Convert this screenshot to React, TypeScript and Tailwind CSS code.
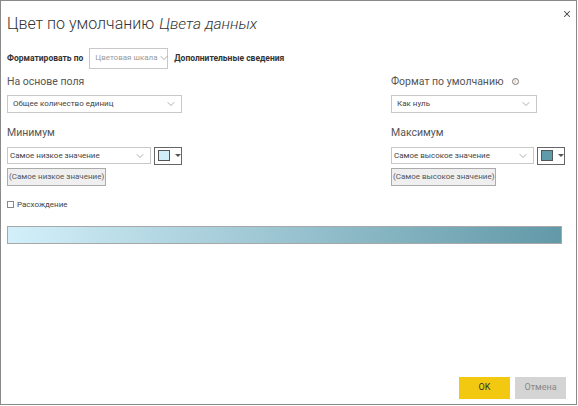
import { ChevronDown, X } from 'lucide-react';

const font = { fontFamily: 'Roboto, "Noto Sans", sans-serif' };

function Select({ text, className, muted }: { text: string; className: string; muted?: boolean }) {
  return (
    <div className={`flex items-center justify-between border border-[#c8c8c8] bg-white pr-1 ${className}`}>
      <span className={`whitespace-nowrap text-[8px] leading-none ${muted ? 'text-[#9a9a9a]' : 'text-[#444]'}`}>{text}</span>
      <ChevronDown className="w-3 h-3 text-[#777] shrink-0" strokeWidth={1.2} />
    </div>
  );
}

function Swatch({ color }: { color: string }) {
  return (
    <div className="flex items-center gap-[5px] w-[28px] h-[18px] border border-[#666] bg-white pl-[3px]">
      <div className="w-[12px] h-[11px] border border-[#555]" style={{ backgroundColor: color }} />
      <div className="w-0 h-0 border-l-[3px] border-r-[3px] border-t-[3px] border-l-transparent border-r-transparent border-t-[#555]" />
    </div>
  );
}

function ColorRow({ label, select, value, color }: { label: string; select: string; value: string; color: string }) {
  return (
    <div className="flex flex-col">
      <div className="text-[10.5px] leading-none text-[#555] mt-[15px]">{label}</div>
      <div className="flex items-center gap-[3px] mt-[8px]">
        <Select text={select} className="w-[144px] h-[17px] pl-[2px]" />
        <Swatch color={color} />
      </div>
      <div className="mt-[3px] self-start h-[18px] px-[1px] flex items-center border border-[#ababab] bg-[#efefef] text-[8px] leading-none text-[#555]">
        {value}
      </div>
    </div>
  );
}

export default function App() {
  return (
    <div style={font} className="w-[577px] h-[405px] border border-[#8a8a8a] bg-white flex flex-col pl-[6px] pr-[11px] relative">
      <button className="absolute right-[4px] top-[8px] text-[#444]">
        <X className="w-[10px] h-[10px]" strokeWidth={2.5} />
      </button>

      <div className="mt-[15px] flex items-baseline gap-[5px] text-[#333] leading-none">
        <span className="text-[16px] font-light">Цвет по умолчанию</span>
        <span className="text-[15.5px] font-light italic">Цвета данных</span>
      </div>

      <div className="mt-[15px] flex items-center gap-[6px]">
        <span className="text-[8.5px] font-bold text-[#333]">Форматировать по</span>
        <Select text="Цветовая шкала" muted className="w-[79px] h-[21px] pl-[5px]" />
        <span className="text-[8.5px] font-bold text-[#333]">Дополнительные сведения</span>
      </div>

      <div className="flex justify-between">
        <div className="flex flex-col w-[175px]">
          <div className="text-[10.5px] leading-none text-[#555] mt-[8px]">На основе поля</div>
          <Select text="Общее количество единиц" className="mt-[8px] w-[175px] h-[18px] pl-[5px]" />
          <ColorRow label="Минимум" select="Самое низкое значение" value="(Самое низкое значение)" color="#cfeef8" />
        </div>
        <div className="flex flex-col w-[174px]">
          <div className="text-[10.5px] leading-none text-[#555] mt-[8px] flex items-center gap-[8px]">
            Формат по умолчанию
            <span className="w-[7px] h-[7px] rounded-full border border-[#777] text-[5px] leading-none flex items-center justify-center text-[#777]">i</span>
          </div>
          <Select text="Как нуль" className="mt-[8px] w-[146px] h-[18px] pl-[5px]" />
          <ColorRow label="Максимум" select="Самое высокое значение" value="(Самое высокое значение)" color="#5f9bab" />
        </div>
      </div>

      <label className="mt-[15px] flex items-center gap-[3px]">
        <span className="w-[7px] h-[7px] border border-[#888] bg-white" />
        <span className="text-[8px] leading-none text-[#444]">Расхождение</span>
      </label>

      <div className="mt-[17px] mr-[3px] h-[18px] border border-[#a8a8a8] bg-gradient-to-r from-[#d3f0fa] to-[#6299a8]" />

      <div className="mt-auto mb-[5px] flex justify-end gap-[5px] -mr-[1px]">
        <button className="w-[51px] h-[22px] bg-[#f2c811] text-[9px] text-[#333]">OK</button>
        <button className="w-[51px] h-[22px] bg-[#d4d4d4] text-[9px] text-[#888]">Отмена</button>
      </div>
    </div>
  );
}
